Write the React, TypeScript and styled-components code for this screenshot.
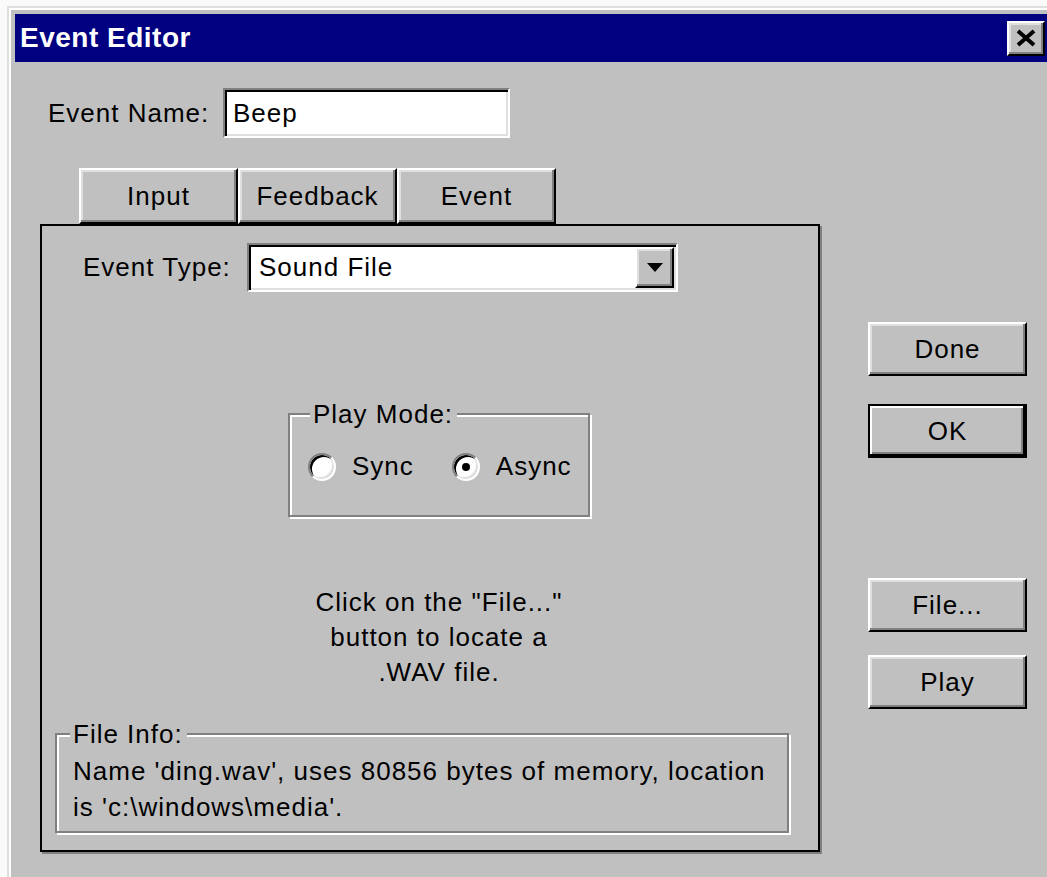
import React from 'react'
import styled, { createGlobalStyle, css } from 'styled-components'

const GlobalStyle = createGlobalStyle`
  html, body {
    margin: 0;
    padding: 0;
    background: #fafafa;
    overflow: hidden;
  }
  body {
    font-family: "Liberation Sans", Arial, sans-serif;
  }
`

// classic 3D bevels, drawn at double size
const raised = css`
  border: 2px solid;
  border-color: #fff #000 #000 #fff;
  box-shadow: inset -2px -2px 0 #808080, inset 2px 2px 0 #dfdfdf;
`

const sunken = css`
  border: 2px solid;
  border-color: #808080 #fff #fff #808080;
  box-shadow: inset 2px 2px 0 #000, inset -2px -2px 0 #dfdfdf;
`

const etched = css`
  border: 2px solid #808080;
  box-shadow: inset 2px 2px 0 #fff, 2px 2px 0 #fff;
`

const Window = styled.div`
  box-sizing: border-box;
  width: 1046px;
  height: 880px;
  margin: 6px 0 0 7px;
  padding: 6px 4px 0 6px;
  background: #c0c0c0;
  border-top: 2px solid #dfdfdf;
  border-left: 2px solid #dfdfdf;
  box-shadow: inset 2px 2px 0 #fff;
  color: #000;
  font-size: 26px;
  letter-spacing: 1px;
`

const TitleBar = styled.div`
  height: 48px;
  display: flex;
  align-items: center;
  justify-content: space-between;
  padding: 0 4px 0 5px;
  background: #000080;
  color: #fff;
  font-weight: bold;
  font-size: 28px;
  letter-spacing: 0.5px;
`

const CloseButton = styled.div`
  ${raised};
  box-sizing: border-box;
  width: 38px;
  height: 35px;
  background: #c0c0c0;
  display: flex;
  align-items: center;
  justify-content: center;
`

const Body = styled.div`
  display: flex;
  padding: 26px 0 0 25px;
`

const LeftColumn = styled.div`
  width: 782px;
`

const FieldRow = styled.div<{ $indent: number }>`
  display: flex;
  align-items: center;
  margin-left: ${({ $indent }) => $indent}px;
`

const Label = styled.span<{ $width: number }>`
  width: ${({ $width }) => $width}px;
  flex-shrink: 0;
  white-space: nowrap;
`

const TextField = styled.div`
  ${sunken};
  box-sizing: border-box;
  width: 287px;
  height: 50px;
  padding-left: 8px;
  background: #fff;
  display: flex;
  align-items: center;
`

const Combo = styled.div`
  ${sunken};
  box-sizing: border-box;
  width: 431px;
  height: 49px;
  padding-left: 10px;
  background: #fff;
  display: flex;
  align-items: center;
  justify-content: space-between;
`

const ComboArrow = styled.div`
  ${raised};
  box-sizing: border-box;
  width: 39px;
  height: 41px;
  margin-right: 2px;
  background: #c0c0c0;
  display: flex;
  align-items: center;
  justify-content: center;
`

const TabStrip = styled.div`
  display: flex;
  margin: 30px 0 0 39px;
`

const Tab = styled.div`
  ${raised};
  box-sizing: border-box;
  width: 159px;
  height: 56px;
  background: #c0c0c0;
  display: flex;
  align-items: center;
  justify-content: center;
`

const Panel = styled.div`
  box-sizing: border-box;
  width: 780px;
  height: 628px;
  padding-top: 17px;
  border: 2px solid #000;
  box-shadow: 2px 2px 0 #808080;
`

const Group = styled.div<{ $width: number; $height: number; $top: number; $left: number }>`
  ${etched};
  position: relative;
  box-sizing: border-box;
  width: ${({ $width }) => $width}px;
  height: ${({ $height }) => $height}px;
  margin: ${({ $top, $left }) => `${$top}px 0 0 ${$left}px`};
`

const Legend = styled.span<{ $left: number }>`
  position: absolute;
  top: -16px;
  left: ${({ $left }) => $left}px;
  padding: 0 4px 0 3px;
  line-height: 30px;
  background: #c0c0c0;
  white-space: nowrap;
`

const RadioRow = styled.div`
  display: flex;
  align-items: center;
  gap: 38px;
  padding: 36px 0 0 18px;
`

const RadioOption = styled.label`
  display: flex;
  align-items: center;
  gap: 16px;
`

const RadioDot = styled.span<{ $checked?: boolean }>`
  position: relative;
  box-sizing: border-box;
  width: 28px;
  height: 28px;
  border-radius: 50%;
  border: 2px solid;
  border-color: #808080 #fff #fff #808080;
  box-shadow: inset 2px 2px 0 #000, inset -2px -2px 0 #dfdfdf;
  background: #fff;

  &::after {
    content: '';
    display: ${({ $checked }) => ($checked ? 'block' : 'none')};
    position: absolute;
    top: 8px;
    left: 8px;
    width: 8px;
    height: 8px;
    border-radius: 50%;
    background: #000;
  }
`

const Hint = styled.div`
  width: 302px;
  margin: 68px 0 0 246px;
  line-height: 35px;
  text-align: center;
`

const InfoText = styled.div`
  padding: 18px 0 0 16px;
  line-height: 36px;
`

const RightColumn = styled.div`
  display: flex;
  flex-direction: column;
  margin-left: 46px;
  padding-top: 234px;
`

const Button = styled.div<{ $gap: number; $default?: boolean }>`
  ${raised};
  box-sizing: border-box;
  width: 159px;
  height: 54px;
  margin-top: ${({ $gap }) => $gap}px;
  background: #c0c0c0;
  display: flex;
  align-items: center;
  justify-content: center;

  ${({ $default }) =>
    $default &&
    css`
      border-color: #000;
      box-shadow: inset -2px -2px 0 #000, inset 2px 2px 0 #fff, inset -4px -4px 0 #808080;
    `}
`

const CloseGlyph = () => (
  <svg width="22" height="18" viewBox="0 0 22 18">
    <path d="M3 2 L19 16 M19 2 L3 16" stroke="#000" strokeWidth="4" />
  </svg>
)

const DownArrow = () => (
  <svg width="16" height="9" viewBox="0 0 16 9">
    <polygon points="0,0 16,0 8,9" fill="#000" />
  </svg>
)

const App: React.FC = () => {
  return (
    <>
      <GlobalStyle />
      <Window>
        <TitleBar>
          <span>Event Editor</span>
          <CloseButton>
            <CloseGlyph />
          </CloseButton>
        </TitleBar>

        <Body>
          <LeftColumn>
            <FieldRow $indent={8}>
              <Label $width={175}>Event Name:</Label>
              <TextField>Beep</TextField>
            </FieldRow>

            <TabStrip>
              <Tab>Input</Tab>
              <Tab>Feedback</Tab>
              <Tab>Event</Tab>
            </TabStrip>

            <Panel>
              <FieldRow $indent={41}>
                <Label $width={164}>Event Type:</Label>
                <Combo>
                  <span>Sound File</span>
                  <ComboArrow>
                    <DownArrow />
                  </ComboArrow>
                </Combo>
              </FieldRow>

              <Group $width={302} $height={104} $top={121} $left={246}>
                <Legend $left={20}>Play Mode:</Legend>
                <RadioRow>
                  <RadioOption>
                    <RadioDot />
                    Sync
                  </RadioOption>
                  <RadioOption>
                    <RadioDot $checked />
                    Async
                  </RadioOption>
                </RadioRow>
              </Group>

              <Hint>
                Click on the "File..."
                <br />
                button to locate a
                <br />
                .WAV file.
              </Hint>

              <Group $width={734} $height={100} $top={43} $left={13}>
                <Legend $left={13}>File Info:</Legend>
                <InfoText>
                  Name 'ding.wav', uses 80856 bytes of memory, location
                  <br />
                  is 'c:\windows\media'.
                </InfoText>
              </Group>
            </Panel>
          </LeftColumn>

          <RightColumn>
            <Button $gap={0}>Done</Button>
            <Button $gap={28} $default>
              OK
            </Button>
            <Button $gap={120}>File...</Button>
            <Button $gap={23}>Play</Button>
          </RightColumn>
        </Body>
      </Window>
    </>
  )
}

export default App
